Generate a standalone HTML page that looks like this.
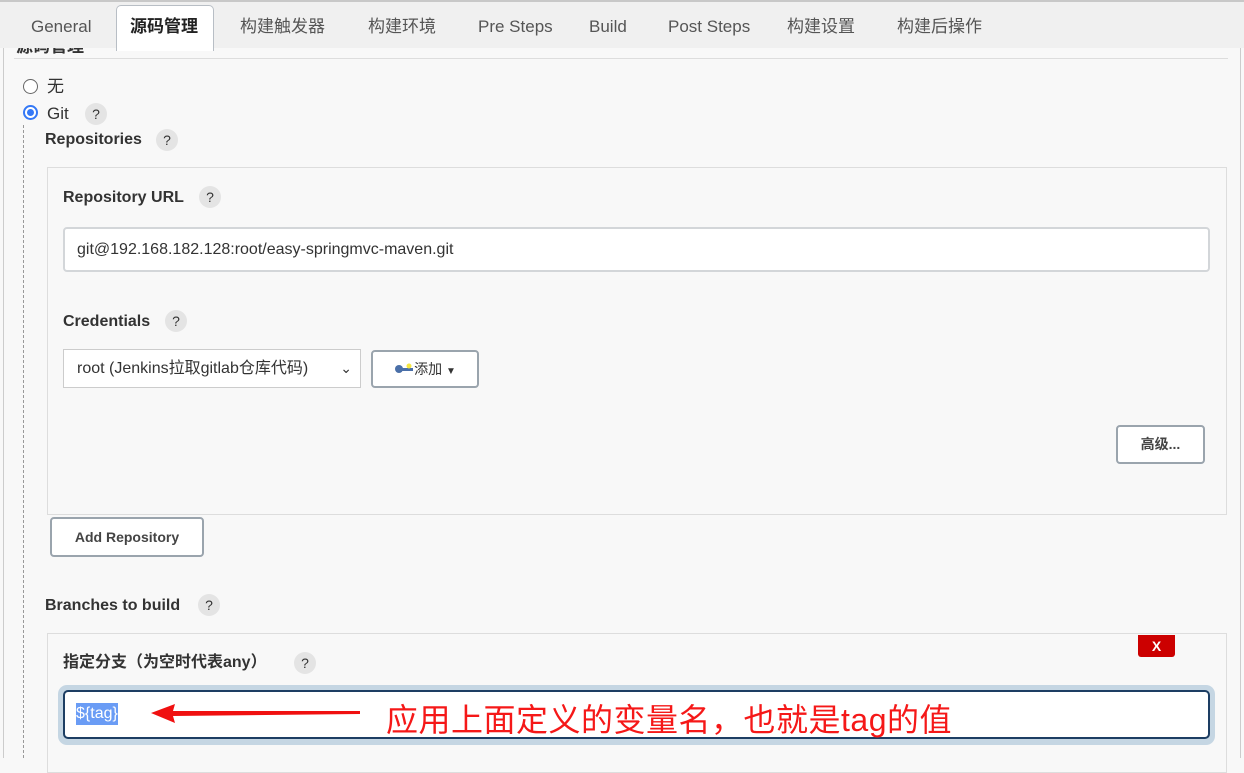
<!DOCTYPE html>
<html><head><meta charset="utf-8"><style>
*{box-sizing:border-box;margin:0;padding:0}
body{width:1244px;height:758px;overflow:hidden;background:#f8f8f8;font-family:"Liberation Sans","Noto Sans CJK SC",sans-serif;color:#333;position:relative}
.a{position:absolute;white-space:nowrap}
.tabs{position:absolute;left:0;top:0;width:1244px;height:48px;background:#f0f0f0;border-top:2px solid #c8c8c8}
.tab{position:absolute;top:15px;font-size:17px;line-height:20px;height:20px;color:#555}
.act{position:absolute;left:116px;top:3px;width:98px;height:46px;background:#fff;border:1px solid #b8bec5;border-bottom:none;border-radius:5px 5px 0 0}
.q{position:absolute;width:22px;height:22px;border-radius:50%;background:#e4e4e4;color:#333;font-size:14px;text-align:center;line-height:22px}
.b{font-weight:bold;font-size:16px;line-height:22px;color:#333}
.box{position:absolute;left:47px;width:1180px;border:1px solid #ddd;background:#f8f8f8}
.inp{position:absolute;background:#fff;border:1px solid #ccc;border-radius:4px;font-size:16px;color:#333}
.btn{position:absolute;background:#fff;border:2px solid #9aa4ad;border-radius:4px;font-size:14px;font-weight:bold;color:#444;text-align:center}
</style></head><body>
<div class="a" style="left:3px;top:40px;width:1px;height:718px;background:#ccc"></div>
<div class="a" style="left:1240px;top:40px;width:1px;height:718px;background:#ccc"></div>
<div class="a b" style="left:16px;top:36px;font-size:17px">源码管理</div>
<div class="tabs">
<div class="act"></div>
<div class="tab" style="left:31px">General</div>
<div class="tab" style="left:130px;font-weight:bold;color:#222">源码管理</div>
<div class="tab" style="left:240px">构建触发器</div>
<div class="tab" style="left:368px">构建环境</div>
<div class="tab" style="left:478px">Pre Steps</div>
<div class="tab" style="left:589px">Build</div>
<div class="tab" style="left:668px">Post Steps</div>
<div class="tab" style="left:787px">构建设置</div>
<div class="tab" style="left:897px">构建后操作</div>
</div>
<div class="a" style="left:14px;top:58px;width:1214px;height:1px;background:#ddd"></div>
<div class="a" style="left:23px;top:79px;width:15px;height:15px;border:1px solid #666;border-radius:50%;background:#fff"></div>
<div class="a" style="left:47px;top:76px;font-size:17px;line-height:22px">无</div>
<div class="a" style="left:23px;top:105px;width:15px;height:15px;border:2px solid #3478f6;border-radius:50%;background:#fff"><div style="margin:2px;width:7px;height:7px;border-radius:50%;background:#3478f6"></div></div>
<div class="a" style="left:47px;top:103px;font-size:17px;line-height:22px">Git</div>
<div class="q" style="left:85px;top:103px">?</div>
<div class="a" style="left:23px;top:125px;height:633px;border-left:1px dashed #999"></div>
<div class="a b" style="left:45px;top:129px">Repositories</div>
<div class="q" style="left:156px;top:129px">?</div>
<div class="box" style="top:167px;height:348px"></div>
<div class="a b" style="left:63px;top:187px">Repository URL</div>
<div class="q" style="left:199px;top:186px">?</div>
<div class="inp" style="left:63px;top:227px;width:1147px;height:45px;border-width:2px;border-color:#d3d6d9;padding:0 12px;line-height:41px">git@192.168.182.128:root/easy-springmvc-maven.git</div>
<div class="a b" style="left:63px;top:311px">Credentials</div>
<div class="q" style="left:165px;top:310px">?</div>
<div class="inp" style="left:63px;top:349px;width:298px;height:39px;border-radius:0;padding:0 13px;line-height:37px">root (Jenkins拉取gitlab仓库代码)<span style="position:absolute;right:8px;top:0;font-size:14px">&#8964;</span></div>
<div class="btn" style="left:371px;top:350px;width:108px;height:38px;line-height:34px;font-weight:normal;color:#333">
<svg width="20" height="12" style="vertical-align:-1px"><circle cx="5" cy="6" r="4" fill="#4a6fa8"/><rect x="8" y="5" width="11" height="3" fill="#4a6fa8"/><circle cx="15" cy="3" r="2.5" fill="#f5e642"/></svg>添加 <span style="font-size:10px">▼</span></div>
<div class="btn" style="left:1116px;top:425px;width:89px;height:39px;line-height:35px">高级...</div>
<div class="btn" style="left:50px;top:517px;width:154px;height:40px;line-height:36px">Add Repository</div>
<div class="a b" style="left:45px;top:595px">Branches to build</div>
<div class="q" style="left:198px;top:594px">?</div>
<div class="box" style="top:633px;height:140px"></div>
<div class="a" style="left:1138px;top:635px;width:37px;height:22px;background:#c00;border-radius:0 0 3px 3px;color:#fff;font-weight:bold;font-size:14px;text-align:center;line-height:22px">X</div>
<div class="a b" style="left:63px;top:652px;font-size:16px">指定分支（为空时代表any）</div>
<div class="q" style="left:294px;top:652px">?</div>
<div class="a" style="left:58px;top:685px;width:1157px;height:60px;background:#c5d6e3;border-radius:9px"></div>
<div class="inp" style="left:63px;top:690px;width:1147px;height:49px;border:2px solid #1d3e63;border-radius:5px"></div>
<div class="a" style="left:76px;top:703px;height:22px;background:#6a9cf5;color:#fff;font-size:16px;line-height:22px">${tag}</div>
<svg class="a" style="left:145px;top:700px" width="220" height="26"><path d="M6 13 L30 4 L28 11 L215 11 L215 14 L28 16 L30 23 Z" fill="#f01010"/></svg>
<div class="a" style="left:386px;top:699px;font-size:32px;letter-spacing:0.5px;color:#f51818;line-height:42px">应用上面定义的变量名，也就是tag的值</div>
</body></html>
